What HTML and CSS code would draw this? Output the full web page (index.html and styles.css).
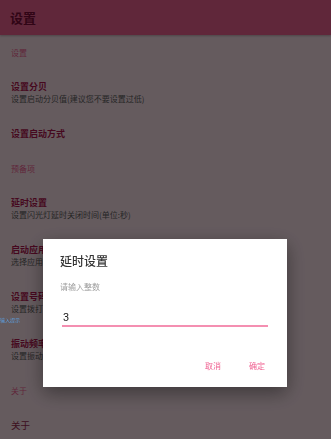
FILE: index.html
```html
<!DOCTYPE html>
<html lang="zh">
<head>
  <meta charset="UTF-8">
  <title>设置</title>
  <link rel="stylesheet" href="styles.css">
</head>
<body>
  <div class="app">
    <div class="toolbar">
      <h1>设置</h1>
    </div>

    <div class="pref_list">
      <div class="pref_category">设置</div>
      <div class="pref_item two_line">
        <div class="pref_title">设置分贝</div>
        <div class="pref_summary">设置启动分贝值(建议您不要设置过低)</div>
      </div>
      <div class="pref_item">
        <div class="pref_title">设置启动方式</div>
      </div>

      <div class="pref_category">预备项</div>
      <div class="pref_item two_line">
        <div class="pref_title">延时设置</div>
        <div class="pref_summary">设置闪光灯延时关闭时间(单位:秒)</div>
      </div>
      <div class="pref_item two_line">
        <div class="pref_title">启动应用</div>
        <div class="pref_summary">选择应用</div>
      </div>
      <div class="pref_item two_line">
        <div class="pref_title">设置号码</div>
        <div class="pref_summary">设置拨打</div>
      </div>
      <div class="pref_item two_line">
        <div class="pref_title">振动频率</div>
        <div class="pref_summary">设置振动</div>
      </div>

      <div class="pref_category">关于</div>
      <div class="pref_item">
        <div class="pref_title plain">关于</div>
      </div>
    </div>
  </div>

  <div class="scrim">
    <div class="dialog">
      <div class="dialog_title">延时设置</div>
      <div class="dialog_hint">请输入整数</div>
      <input type="text" class="dialog_input" value="3">
      <div class="dialog_buttons">
        <button type="button" class="text_btn">取消</button>
        <button type="button" class="text_btn">确定</button>
      </div>
    </div>
  </div>

  <div class="toast_tag">输入提示</div>
</body>
</html>
```

FILE: styles.css
```css
* {
	box-sizing: border-box;
}

body {
	margin: 0;
	background-color: #fce4ec;
	font-family: "Noto Sans CJK SC", Roboto, sans-serif;
}

.app {
	width: 100%;
	min-height: 100vh;
}

.toolbar {
	height: 35px;
	display: flex;
	align-items: center;
	padding-left: 10px;
	background-color: #f06292;
	box-shadow: 0 1px 2px rgb(0 0 0 / 25%);
}

.toolbar h1 {
	margin: 0;
	font-size: 13px;
	font-weight: 700;
	color: #7a0d38;
}

.pref_list {
	display: flex;
	flex-direction: column;
}

.pref_category {
	height: 34px;
	display: flex;
	align-items: center;
	padding-left: 11px;
	font-size: 8px;
	color: #f06292;
}

.pref_item {
	height: 35px;
	display: flex;
	flex-direction: column;
	justify-content: center;
	padding-left: 11px;
}

.pref_item.two_line {
	height: 47px;
}

.pref_title {
	font-size: 9px;
	line-height: 12px;
	font-weight: 700;
	color: #b0154f;
}

.pref_title.plain {
	font-weight: 400;
	font-size: 9.5px;
	color: #9a2a4e;
}

.pref_summary {
	font-size: 8px;
	line-height: 11px;
	color: #5e5e5e;
}

.scrim {
	position: fixed;
	inset: 0;
	background-color: rgb(0 0 0 / 60%);
}

.dialog {
	position: absolute;
	top: 239px;
	left: 43px;
	width: 244px;
	height: 148px;
	background-color: white;
	box-shadow: 0 6px 18px rgb(0 0 0 / 40%);
	display: flex;
	flex-direction: column;
	padding-top: 14px;
}

.dialog_title {
	margin-left: 17px;
	font-size: 12px;
	line-height: 16px;
	font-weight: 500;
	color: #333;
}

.dialog_hint {
	margin: 12px 0 0 17px;
	font-size: 8px;
	line-height: 11px;
	color: #9e9e9e;
}

.dialog_input {
	margin: 18px 19px 0 19px;
	height: 17px;
	padding: 0 0 1px 1px;
	border: none;
	border-bottom: 2px solid #f48fb1;
	outline: none;
	font-family: Roboto, sans-serif;
	font-size: 11px;
	color: #222;
	background: transparent;
}

.dialog_buttons {
	display: flex;
	justify-content: flex-end;
	gap: 28px;
	margin-top: 33px;
	padding-right: 22px;
}

.text_btn {
	border: none;
	outline: none;
	padding: 0;
	background: none;
	font-family: "Noto Sans CJK SC", sans-serif;
	font-size: 8px;
	line-height: 11px;
	color: #f06292;
	cursor: pointer;
}

.toast_tag {
	position: absolute;
	left: 0;
	top: 317px;
	font-size: 5px;
	line-height: 6px;
	color: #5c9ee0;
}
```
